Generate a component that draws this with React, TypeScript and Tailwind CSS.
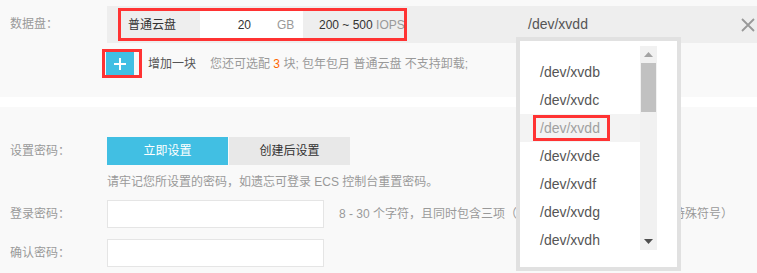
import React from 'react';

const devices = ['/dev/xvdb', '/dev/xvdc', '/dev/xvdd', '/dev/xvde', '/dev/xvdf', '/dev/xvdg', '/dev/xvdh'];

function DeviceDropdown() {
    return (
        <div className="absolute left-[516px] top-[37px] w-[165px] h-[234px] border-4 border-[#e1e1e1] bg-white">
            <div className="relative w-full h-full">
                <ul className="w-[120px] pt-[17px]">
                    {devices.map((d) =>
                        d === '/dev/xvdd' ? (
                            <li key={d} className="h-[28px] flex items-center bg-[#f3f3f3]">
                                <span className="ml-[13px] w-[77px] h-[26px] border-[3px] border-[#f33] pl-[4px] flex items-center text-[14px] text-[#a0a0a0]">{d}</span>
                            </li>
                        ) : (
                            <li key={d} className="h-[28px] flex items-center pl-[20px] text-[14px] text-[#555]">{d}</li>
                        )
                    )}
                </ul>
                {/* scrollbar */}
                <div className="absolute left-[120px] top-[5px] w-[17px] h-[204px] bg-[#f1f1f1] flex flex-col">
                    <div className="h-[17px] flex items-center justify-center">
                        <svg width="9" height="5" viewBox="0 0 9 5"><path d="M4.5 0 L9 5 L0 5 Z" fill="#a3a3a3" /></svg>
                    </div>
                    <div className="h-[49px] mx-[1px] bg-[#c1c1c1]" />
                    <div className="flex-1" />
                    <div className="h-[17px] flex items-center justify-center">
                        <svg width="9" height="5" viewBox="0 0 9 5"><path d="M0 0 L9 0 L4.5 5 Z" fill="#505050" /></svg>
                    </div>
                </div>
            </div>
        </div>
    );
}

export default function App() {
    return (
        <div className="relative w-[757px] h-[273px] overflow-hidden bg-white font-['Liberation_Sans','Noto_Sans_CJK_SC',sans-serif]">
            {/* data disk section */}
            <div className="bg-[#f9f9f9] h-[97px] pt-[6px]">
                <div className="flex h-[37px]">
                    <div className="w-[107px] pl-[10px] pt-[9px] text-[12px] text-[#999]">数据盘：</div>
                    <div className="flex-1 bg-[#eee] flex items-center">
                        <div className="ml-[11px] w-[289px] h-[33px] border-[3px] border-[#f33] flex items-center whitespace-nowrap">
                            <div className="w-[79px] shrink-0 pl-[7px] text-[12px] text-[#333]">普通云盘</div>
                            <div className="w-[103px] shrink-0 h-full bg-white flex items-center text-[12px]">
                                <span className="w-[51px] text-right text-[#333]">20</span>
                                <span className="ml-[26px] text-[#999]">GB</span>
                            </div>
                            <div className="ml-[16px] shrink-0 text-[12px] text-[#333] whitespace-nowrap">
                                200 ~ 500 <span className="text-[#999]">IOPS</span>
                            </div>
                        </div>
                        <div className="ml-[121px] text-[14px] text-[#555]">/dev/xvdd</div>
                        <button className="ml-auto mr-[2px] w-[14px] h-[14px]">
                            <svg width="14" height="14" viewBox="0 0 14 14">
                                <path d="M1 1 L13 13 M13 1 L1 13" stroke="#999" strokeWidth="1.8" />
                            </svg>
                        </button>
                    </div>
                </div>
                <div className="flex items-center mt-[6px] pl-[102px] h-[29px]">
                    <div className="w-[40px] h-[29px] border-[3px] border-[#f33] pl-[1px]">
                        <div className="w-[28px] h-full bg-[#41bfe3] flex items-center justify-center">
                            <svg width="14" height="14" viewBox="0 0 14 14">
                                <path d="M7 1 V13 M1 7 H13" stroke="#fff" strokeWidth="2" />
                            </svg>
                        </div>
                    </div>
                    <span className="ml-[6px] text-[12px] text-[#555]">增加一块</span>
                    <span className="ml-[14px] text-[12px] text-[#999]">
                        您还可选配 <span className="text-[#f60]">3</span> 块; 包年包月 普通云盘 不支持卸载;
                    </span>
                </div>
            </div>

            {/* password section */}
            <div className="mt-[10px] bg-[#f9f9f9] h-[166px] pt-[30px]">
                <div className="flex items-center h-[28px]">
                    <div className="w-[107px] pl-[10px] text-[12px] text-[#999]">设置密码：</div>
                    <div className="flex gap-[1px]">
                        <button className="w-[121px] h-[28px] bg-[#41bfe3] text-white text-[12px]">立即设置</button>
                        <button className="w-[121px] h-[28px] bg-[#e8e8e8] text-[#333] text-[12px]">创建后设置</button>
                    </div>
                </div>
                <div className="mt-[9px] pl-[107px] text-[12px] leading-[17px] text-[#999]">
                    请牢记您所设置的密码，如遗忘可登录 ECS 控制台重置密码。
                </div>
                <div className="mt-[9px] flex items-center h-[28px]">
                    <div className="w-[107px] pl-[10px] text-[12px] text-[#999]">登录密码：</div>
                    <input className="w-[217px] h-[28px] bg-white border border-[#e5e5e5] outline-none" type="password" />
                    <span className="ml-[15px] text-[12px] text-[#999] whitespace-nowrap">
                        8 - 30 个字符，且同时包含三项（大写字母、小写字母、数字和特殊符号）
                    </span>
                </div>
                <div className="mt-[11px] flex items-center h-[28px]">
                    <div className="w-[107px] pl-[10px] text-[12px] text-[#999]">确认密码：</div>
                    <input className="w-[217px] h-[28px] bg-white border border-[#e5e5e5] outline-none" type="password" />
                </div>
            </div>

            <DeviceDropdown />
        </div>
    );
}
